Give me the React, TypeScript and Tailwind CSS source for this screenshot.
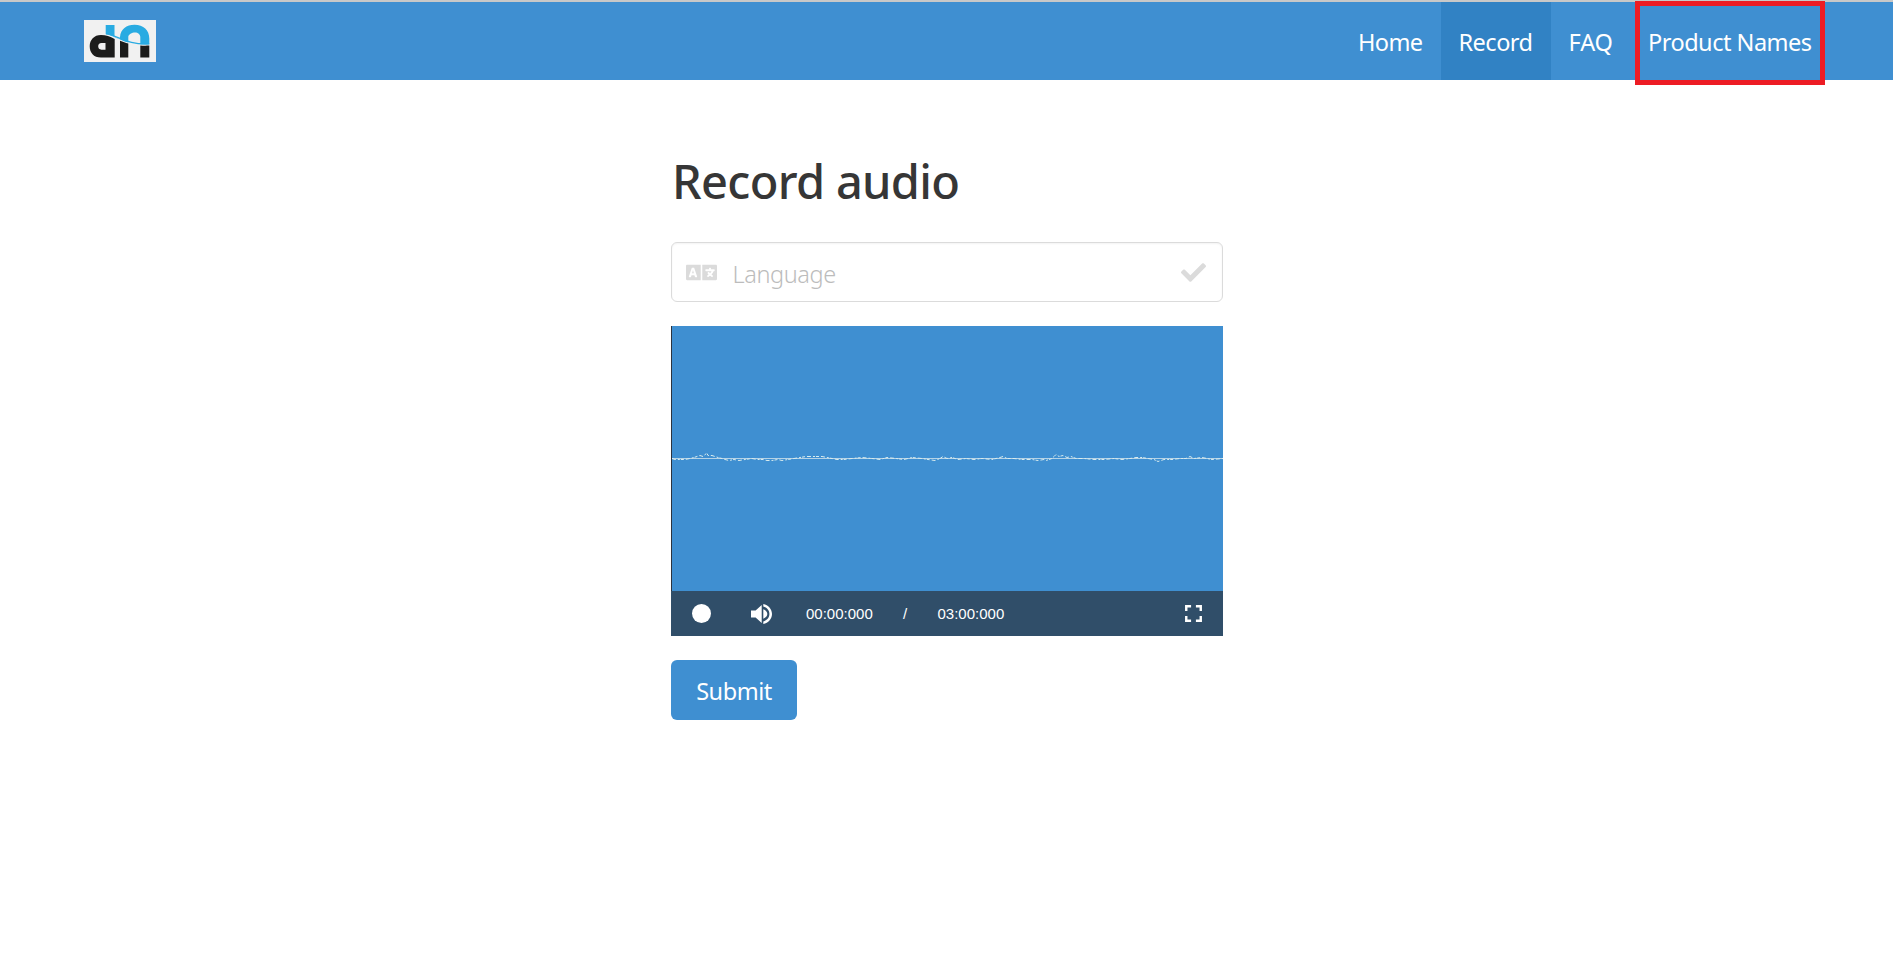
import { FaCheck, FaLanguage } from "react-icons/fa";
import { MdFullscreen } from "react-icons/md";

const WAVE_POINTS: [number, number][] = [
  [0, 0], [3, 1], [7, 1], [13, 1], [18, 0], [22, -1], [25, -2], [28, -3], [31, -2], [33, -4], [35, -5], [36, -3],
  [40, -3], [43, -2], [46, -1], [50, 0], [53, 1], [57, 2], [62, 1], [67, 2], [73, 1], [80, 0], [85, 1], [91, 1],
  [95, 2], [100, 2], [106, 1], [110, 2], [116, 1], [122, 0], [128, -1], [134, -2], [142, -2], [150, -2], [155, -1],
  [160, 0], [165, 1], [172, 1], [180, 0], [190, -1], [200, 0], [208, 1], [215, -1], [224, 0], [232, 1], [240, -1],
  [250, 0], [256, 1], [263, 2], [268, 0], [271, -2], [275, 0], [280, -1], [286, 1], [294, 0], [302, 1], [310, 0],
  [320, 1], [328, -1], [331, -2], [335, 0], [342, 0], [350, 1], [360, 1], [366, 2], [372, 1], [374, 2], [380, 0],
  [382, -2], [384, -4], [387, -2], [391, -3], [395, -1], [399, -2], [404, 0], [412, 0], [422, 1], [432, 1],
  [442, 0], [450, 1], [458, 0], [464, -1], [470, -1], [476, 0], [482, 1], [486, 3], [492, 1], [500, 1], [508, 0],
  [514, 0], [518, -2], [522, 0], [530, -1], [540, 1], [551, 0],
];

function Logo() {
  return (
    <svg className="h-[42px] w-[72px]" viewBox="0 0 72 42" role="img" aria-label="Logo">
      <rect width="72" height="42" fill="#f1f1f1" />
      <path
        fill="#1c1c1b"
        fillRule="evenodd"
        d="M17 15C22 15.200 26 16.400 30.700 19V37.500H17C9.500 37.500 5.700 32.500 5.700 26.200S10 15 17 15ZM21.500 23H17.500C15.200 23 14.200 24.500 14.200 26.300S15.200 29.700 17.500 29.700H21.500Z"
      />
      <path fill="#1c1c1b" d="M36 20.800C39 22 41.500 22.800 44.300 23.500V37.500H36ZM56.300 25.500C59.500 25.800 62 25.800 65.300 25.600V37.500H56.300Z" />
      <path
        fill="#29abe2"
        d="M21.700 5H30.500V17.200L36 19.500V17C36.500 9 42.500 4.700 50.500 4.700C59.500 4.700 65.300 10 65.300 18.500V24.300C62 24.700 59.500 24.600 56.300 24.400V17C56.300 14.300 54 12.500 51 12.500S44.300 14.500 44.300 17V22.500C36 20.500 30 15.300 21.700 14.200Z"
      />
      <path fill="none" stroke="#29abe2" strokeWidth="1.200" d="M22 13.700C35 16 43 25 65.300 23.800" />
    </svg>
  );
}

function VolumeIcon() {
  return (
    <svg className="h-5 w-[21px]" viewBox="0 0 21 20" fill="white" aria-hidden="true">
      <path d="M0 6.600H4.600L10.700 1V19L4.600 13.400H0Z" />
      <path d="M12.300 5.300C14.700 6.200 16.300 8 16.300 10S14.700 13.800 12.300 14.700Z" />
      <path d="M12.300 0C17.300 0.900 21 5 21 10S17.300 19.100 12.300 20V17.400C15.900 16.500 18.400 13.600 18.400 10S15.900 3.500 12.300 2.600Z" />
    </svg>
  );
}

function Waveform() {
  return (
    <svg className="-mt-px h-10 w-full" viewBox="0 0 551 40" preserveAspectRatio="none" aria-hidden="true">
      <path d="M0 20.500H551" stroke="#b5d3e6" strokeWidth="1" />
      <polyline
        points={WAVE_POINTS.map(([x, y]) => `${x},${20.5 + y}`).join(" ")}
        fill="none"
        stroke="#d9ecee"
        strokeWidth="1"
        strokeDasharray="4 2 2 1 3 2"
      />
    </svg>
  );
}

export default function App() {
  return (
    <div className="min-h-[977px] bg-white font-['Noto_Sans','Open_Sans',sans-serif]">
      <header className="flex h-20 items-stretch justify-between border-t-2 border-[#c8c8c8] bg-[#3f8fd1] pl-[84px] pr-[68px]">
        <a href="#" className="flex items-center">
          <Logo />
        </a>
        <nav className="flex text-[23.5px] leading-9 text-white">
          <a href="#" className="flex w-[103px] items-center whitespace-nowrap pl-5 pt-0.5 tracking-[-0.6px]">Home</a>
          <a href="#" className="flex w-[110px] items-center whitespace-nowrap bg-[#3182c4] pl-[17.5px] pt-0.5 tracking-[-0.5px]">Record</a>
          <a href="#" className="flex w-[84px] items-center whitespace-nowrap pl-[17.5px] pt-0.5 tracking-[-0.1px]">FAQ</a>
          <a href="#" className="-mt-px -mb-[5px] flex w-[190px] items-center whitespace-nowrap border-5 border-[#ed1c24] pb-0.5 pl-2 tracking-[-0.5px]">
            Product Names
          </a>
        </nav>
      </header>

      <main className="mx-auto flex w-[553px] flex-col items-start pl-px">
        <h1 className="mt-[68px] h-[94px] whitespace-nowrap pl-px text-[47px] font-medium leading-[66px] tracking-[-0.7px] text-[#363636]">
          Record audio
        </h1>
        <label className="flex h-[60px] w-full items-center rounded-[6px] border border-[#dbdbdb] bg-white pl-[14px] pr-4 shadow-[inset_0_1px_2px_rgba(10,10,10,0.05)]">
          <FaLanguage className="h-[25px] w-[31px] shrink-0 text-[#dbdbdb]" />
          <input
            placeholder="Language"
            className="ml-[15.5px] h-9 min-w-0 flex-1 bg-transparent pt-[3px] text-[23.5px] font-light tracking-[-0.4px] text-[#363636] outline-none placeholder:text-[#bcbcbc]"
          />
          <FaCheck className="size-[25px] shrink-0 text-[#dbdbdb]" />
        </label>

        <section className="mt-6 flex h-[310px] w-full flex-col">
          <div className="flex h-[265px] items-center border-l border-[#2b333f] bg-[#3f8fd1]">
            <Waveform />
          </div>
          <div className="flex h-[45px] items-center bg-[#304e69] font-['Liberation_Sans',Arial,sans-serif] text-[15px] text-white">
            <button className="ml-[21px] size-[19px] rounded-full bg-white" aria-label="Record" />
            <div className="ml-10 flex">
              <VolumeIcon />
            </div>
            <span className="ml-[34px] w-[67px] pt-px">00:00:000</span>
            <span className="ml-[30px] w-[5px] pt-px">/</span>
            <span className="ml-[29.5px] pt-px">03:00:000</span>
            <MdFullscreen className="ml-auto mr-[15px] size-[29px]" />
          </div>
        </section>

        <button className="mt-6 h-[60px] w-[126px] whitespace-nowrap rounded-[6px] bg-[#3f8fd1] pt-1 text-[23.5px] tracking-[-0.45px] text-white">
          Submit
        </button>
      </main>
    </div>
  );
}
